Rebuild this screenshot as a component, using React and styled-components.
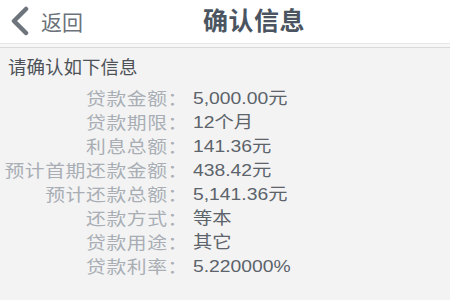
import React from "react";
import styled, { createGlobalStyle } from "styled-components";

const Global = createGlobalStyle`
  body {
    margin: 0;
    background: #f3f3f3;
    font-family: "Noto Sans CJK SC", "Noto Sans", sans-serif;
  }
`;

const Page = styled.div`
  width: 450px;
  height: 300px;
  overflow: hidden;
  background: #f3f3f3;
`;

const Header = styled.div`
  height: 43px;
  display: flex;
  align-items: center;
  background: #ffffff;
  border-bottom: 1px solid #e8e8e8;
  box-shadow: 0 3px 0 #f7f7f7, 0 4px 0 #d9d9d9;
`;

const Back = styled.div`
  display: flex;
  align-items: center;
  padding-left: 9px;
  gap: 10px;
  color: #6c727a;
  font-size: 21px;
  width: 194px;
  margin-top: -2px;
`;

const Title = styled.h1`
  margin: 0;
  margin-top: -6px;
  font-size: 25px;
  font-weight: 700;
  color: #4b5561;
  letter-spacing: 0.5px;
`;

const Body = styled.div`
  padding-top: 10px;
`;

const Intro = styled.div`
  padding-left: 8px;
  font-size: 18.5px;
  line-height: 24px;
  color: #4e5258;
  margin-bottom: 8px;
`;

const List = styled.div`
  display: grid;
  grid-template-columns: 188px 1fr;
  column-gap: 5px;
`;

/* the screenshot is slightly stretched sideways, so the row text is too */
const Label = styled.div`
  text-align: right;
  font-size: 16.5px;
  line-height: 24px;
  color: #a9aeb5;
  letter-spacing: 0.5px;
  white-space: nowrap;
  transform: scaleX(1.2);
  transform-origin: right center;
`;

const Value = styled.div`
  font-family: "Liberation Sans", "Noto Sans CJK SC", sans-serif;
  font-size: 16.5px;
  line-height: 24px;
  color: #5c636b;
  white-space: nowrap;
  transform: scaleX(1.17);
  transform-origin: left center;
`;

const rows = [
  ["贷款金额", "5,000.00元"],
  ["贷款期限", "12个月"],
  ["利息总额", "141.36元"],
  ["预计首期还款金额", "438.42元"],
  ["预计还款总额", "5,141.36元"],
  ["还款方式", "等本"],
  ["贷款用途", "其它"],
  ["贷款利率", "5.220000%"],
];

const Chevron = () => (
  <svg width="22" height="30" viewBox="0 0 22 30">
    <path
      d="M17 3 L5 15 L17 27"
      fill="none"
      stroke="#6e747c"
      strokeWidth="4.5"
      strokeLinecap="round"
      strokeLinejoin="round"
    />
  </svg>
);

export default function App() {
  return (
    <Page>
      <Global />
      <Header>
        <Back>
          <Chevron />
          <span>返回</span>
        </Back>
        <Title>确认信息</Title>
      </Header>
      <Body>
        <Intro>请确认如下信息</Intro>
        <List>
          {rows.map(([k, v]) => (
            <React.Fragment key={k}>
              <Label>{k}：</Label>
              <Value>{v}</Value>
            </React.Fragment>
          ))}
        </List>
      </Body>
    </Page>
  );
}
